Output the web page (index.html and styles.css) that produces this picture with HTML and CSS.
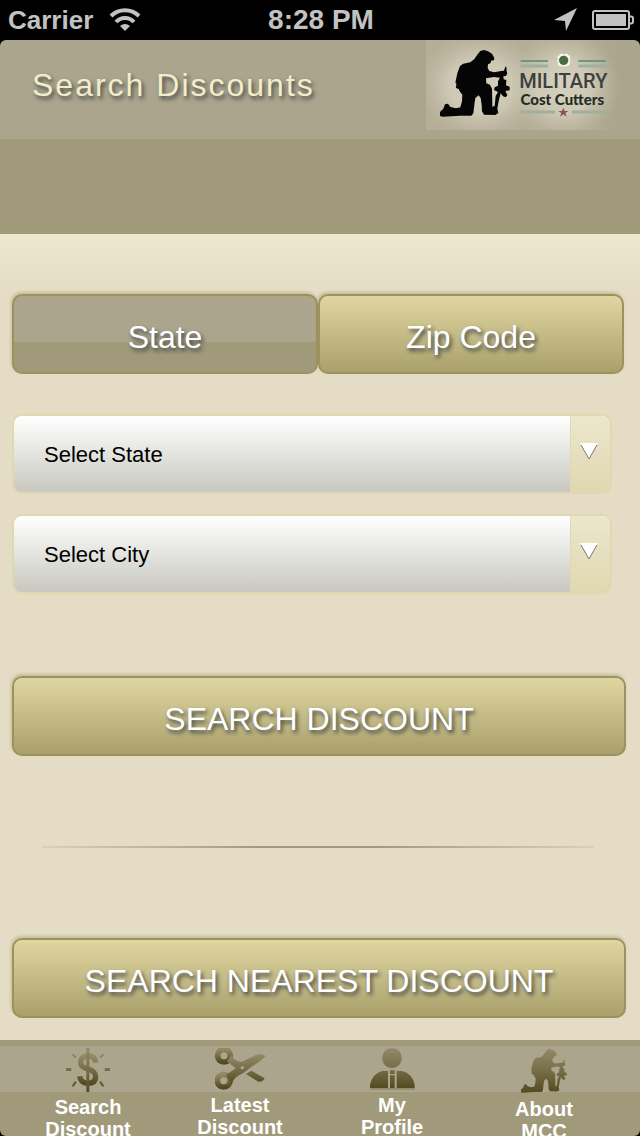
FILE: index.html
```html
<!DOCTYPE html>
<html lang="en">
<head>
<meta charset="utf-8">
<meta name="viewport" content="width=device-width, initial-scale=1">
<title>Search Discounts</title>
<link rel="stylesheet" href="styles.css">
</head>
<body>
<svg class="defs" aria-hidden="true">
  <defs>
    <linearGradient id="olive" x1="0" y1="0" x2="0" y2="1">
      <stop offset="0" stop-color="#918a68"/>
      <stop offset="0.5" stop-color="#766e48"/>
      <stop offset="1" stop-color="#544a22"/>
    </linearGradient>
    <path id="soldier" d="M173 55 L181 45 L192 42 L204 46 L216 53 L223 66 L222 73 L213 74 L212 81 L204 85 L203 96 L208 105 L222 109 L244 105 L252 104 L256 92 L259 92 L260 106 L262 112 L258 120 L250 121 L251 130 L259 132 L258 148 L269 152 L269 163 L256 165 L262 178 L257 184 L249 181 L242 172 L236 195 L232 218 L235 231 L226 237 L192 236 L186 226 L185 206 L182 186 L176 178 L166 186 L163 206 L160 232 L154 239 L120 239 L68 242 L60 240 L60 228 L70 218 L75 205 L84 203 L91 213 L108 217 L121 214 L126 196 L127 176 L120 167 L116 159 L108 156 L109 142 L106 140 L112 112 L120 90 L130 83 L151 79 L163 69 Z M198 127 L199 142 L210 146 L216 158 L217 212 L224 210 L227 180 L234 168 L222 162 L224 154 L234 149 L234 136 L240 125 L222 123 Z" fill-rule="evenodd"/>
  </defs>
</svg>
<div class="app">
  <div class="status">
    <div class="status-left">
      <span>Carrier</span>
      <svg class="wifi" viewBox="0 0 32 24" width="32" height="24" aria-hidden="true">
        <path d="M2 8 A20 20 0 0 1 30 8" fill="none" stroke="#c2c2c2" stroke-width="4"/>
        <path d="M7 14 A12 12 0 0 1 25 14" fill="none" stroke="#c2c2c2" stroke-width="4"/>
        <path d="M16 23 L11 18 Q16 14 21 18 Z" fill="#c2c2c2"/>
      </svg>
    </div>
    <span class="time">8:28 PM</span>
    <div class="status-right">
      <svg viewBox="0 0 24 24" width="24" height="24" aria-hidden="true"><path d="M23 0 L12 23 L11 13 L0 12 Z" fill="#c2c2c2"/></svg>
      <svg viewBox="0 0 42 20" width="42" height="20" aria-hidden="true">
        <rect x="1" y="1" width="36" height="18" rx="2" fill="none" stroke="#c2c2c2" stroke-width="2"/>
        <rect x="4" y="4" width="30" height="12" fill="#c2c2c2"/>
        <path d="M38 6.500 H39 Q41 6.500 41 8.500 V11.500 Q41 13.500 39 13.500 H38" fill="none" stroke="#c2c2c2" stroke-width="2"/>
      </svg>
    </div>
  </div>

  <header class="header">
    <h1 class="title">Search Discounts</h1>
    <svg class="logo" viewBox="0 12 660 282" width="220" height="94" role="img" aria-label="Military Cost Cutters">
      <defs>
        <radialGradient id="glowA" cx="0.5" cy="0.5" r="0.5">
          <stop offset="0" stop-color="#d6d1bd"/><stop offset="0.5" stop-color="#d4cfbb" stop-opacity="0.8"/><stop offset="1" stop-color="#c4bea8" stop-opacity="0"/>
        </radialGradient>
        <linearGradient id="plateFill">
          <stop offset="0" stop-color="#b8b29b" stop-opacity="0.7"/><stop offset="0.8" stop-color="#b8b29b" stop-opacity="0.6"/><stop offset="1" stop-color="#b8b29b" stop-opacity="0"/>
        </linearGradient>
        <clipPath id="plate"><rect x="18" y="12" width="582" height="270"/></clipPath>
      </defs>
      <g clip-path="url(#plate)">
        <rect x="18" y="12" width="582" height="270" fill="url(#plateFill)"/>
        <ellipse cx="180" cy="150" rx="190" ry="165" fill="url(#glowA)"/>
        <ellipse cx="430" cy="150" rx="170" ry="165" fill="url(#glowA)"/>
      </g>
      <use href="#soldier" fill="#050505"/>
      <g stroke="#6d9688" stroke-width="6">
        <path d="M302 75 H384 M475 75 H557"/>
        <path d="M302 90 H384 M475 90 H557" stroke="#9fb09d" stroke-width="9"/>
        <path d="M302 228 H405 M456 228 H557" stroke="#9fb09d" stroke-width="9"/>
      </g>
      <rect x="415" y="56" width="33" height="33" rx="9" fill="#f7f9f2" stroke="#f7f9f2" stroke-width="5" stroke-dasharray="8 3"/>
      <circle cx="431" cy="73" r="14" fill="#4b6b42"/>
      <text class="logo-top" x="430" y="156" text-anchor="middle">MILITARY</text>
      <text class="logo-bottom" x="427" y="208" text-anchor="middle">Cost Cutters</text>
      <path d="M430 215 L434 225 L445 225 L436 231 L440 242 L430 235 L420 242 L424 231 L415 225 L426 225 Z" fill="#87505a"/>
    </svg>
  </header>
  <div class="band"></div>

  <main class="content">
    <div class="segments">
      <button class="btn btn-active" type="button" aria-pressed="true">State</button>
      <button class="btn" type="button" aria-pressed="false">Zip Code</button>
    </div>
    <form class="form">
      <div class="picker">
        <select class="picker-input" aria-label="State"><option>Select State</option></select>
        <span class="picker-arrow"><svg viewBox="0 0 18 17" width="18" height="17" aria-hidden="true"><path d="M0 0 H18 L9 17 Z" fill="#fff"/><path d="M1 2 L9 16 L17 2" fill="none" stroke="#77746a"/></svg></span>
      </div>
      <div class="picker">
        <select class="picker-input" aria-label="City"><option>Select City</option></select>
        <span class="picker-arrow"><svg viewBox="0 0 18 17" width="18" height="17" aria-hidden="true"><path d="M0 0 H18 L9 17 Z" fill="#fff"/><path d="M1 2 L9 16 L17 2" fill="none" stroke="#77746a"/></svg></span>
      </div>
    </form>
    <button class="btn" type="button">SEARCH DISCOUNT</button>
    <hr class="divider">
    <button class="btn" type="button">SEARCH NEAREST DISCOUNT</button>
  </main>

  <nav class="tabs">
    <a class="tab" href="#search">
      <svg viewBox="0 0 132 132" width="44" height="44" aria-hidden="true">
        <path d="M89 44 Q88 24 66 24 Q44 25 44 43 Q44 58 66 63 Q89 69 89 87 Q88 106 66 106 Q43 105 41 85" fill="none" stroke="url(#olive)" stroke-width="16"/>
        <path d="M61 0 H70 V132 H61 Z M0 60 H16 V69 H0 Z M116 60 H132 V69 H116 Z M17 18 L22 17 L31 27 L27 31 Z M115 18 L110 17 L101 27 L105 31 Z M17 114 L27 99 L32 103 L23 116 Z M115 114 L105 99 L100 103 L109 116 Z" fill="url(#olive)"/>
      </svg>
      <span>Search<br>Discount</span>
    </a>
    <a class="tab" href="#latest">
      <svg viewBox="0 0 153 126" width="51" height="42" aria-hidden="true">
        <g fill="none" stroke="url(#olive)" stroke-width="17">
          <circle cx="27" cy="23" r="19"/><circle cx="26" cy="98" r="19"/>
        </g>
        <path d="M36 40 L50 22 Q56 40 80 42 L121 22 Q143 15 152 24 Q136 42 113 54 L85 75 Q56 86 50 110 L33 80 Q48 72 62 61 Q49 51 36 40 Z M93 78 L109 68 L149 91 Q144 103 130 101 Z" fill="url(#olive)"/>
        <circle cx="82" cy="59" r="5" fill="#aca58d"/>
      </svg>
      <span>Latest<br>Discount</span>
    </a>
    <a class="tab" href="#profile">
      <svg viewBox="0 0 135 126" width="45" height="42" aria-hidden="true">
        <path d="M66 1 C86 1 95 15 95 31 C95 49 82 60 66 60 C50 60 37 49 37 31 C37 15 47 1 66 1 Z M0 121 V110 Q8 76 37 69 H54 V121 Z M80 69 H97 Q126 76 134 110 V121 H80 Z M60 67 H74 V78 H60 Z M60 82 H74 V121 H60 Z" fill="url(#olive)"/>
        <path d="M0 123 H134" stroke="#918a68" stroke-width="4"/>
      </svg>
      <span>My<br>Profile</span>
    </a>
    <a class="tab" href="#about">
      <svg viewBox="60 38 210 210" width="46" height="46" aria-hidden="true"><use href="#soldier" fill="url(#olive)"/></svg>
      <span>About<br>MCC</span>
    </a>
  </nav>
</div>
</body>
</html>
```

FILE: styles.css
```css
* {
  box-sizing: border-box;
}

body {
  margin: 0;
  background: #000;
  font-family: "Liberation Sans", Arial, sans-serif;
}

.defs {
  position: absolute;
  width: 0;
  height: 0;
}

.app {
  display: flex;
  flex-direction: column;
  min-height: 100vh;
}

.status {
  display: grid;
  grid-template-columns: 1fr auto 1fr;
  align-items: center;
  height: 40px;
  padding: 0 6px 0 8px;
  color: #c2c2c2;
  font-size: 26px;
  font-weight: bold;
}

.status-left,
.status-right {
  display: flex;
  align-items: center;
  gap: 14px;
}

.status-left {
  gap: 16px;
}

.status-right {
  justify-content: flex-end;
}

.time {
  font-size: 28px;
}

.header {
  display: flex;
  justify-content: space-between;
  align-items: flex-start;
  padding-bottom: 5px;
  border-radius: 6px 6px 0 0;
  background: #aca58d;
}

.title {
  margin: 0;
  padding: 27px 0 0 32px;
  color: #f3edc9;
  font-size: 32px;
  font-weight: normal;
  line-height: 36px;
  letter-spacing: 2px;
  text-shadow: 2px 3px 4px #3c4346;
}

.logo {
  flex: none;
}

.logo-top {
  fill: #3b413e;
  font: 500 60px Roboto, sans-serif;
}

.logo-bottom {
  fill: #252b29;
  font: 900 45px Lato, sans-serif;
}

.band {
  height: 95px;
  background: #a19a7a;
}

.content {
  flex: 1;
  padding: 60px 14px 22px 12px;
  background: #e4dcc5 linear-gradient(#eee8d1, #e4dcc5) no-repeat 0 0 / 100% 60px;
}

.segments {
  display: grid;
  grid-template-columns: 1fr 1fr;
  margin-right: 2px;
}

.btn {
  display: block;
  width: 100%;
  height: 80px;
  padding: 6px 0 0;
  border: 2px solid #9b925d;
  border-radius: 10px;
  background: linear-gradient(#dfd6a2, #aaa06c);
  box-shadow: -1px -2px 3px rgba(155, 146, 93, 0.4);
  color: #fff;
  font-family: inherit;
  font-size: 32px;
  line-height: 36px;
  text-shadow: 2px 3px 4px #3c4346;
}

.btn-active {
  background: linear-gradient(#aca58d 60%, #a19a7a 60%);
}

.form {
  display: grid;
  gap: 20px;
  margin: 40px 14px 82px 0;
}

.picker {
  position: relative;
  height: 80px;
  border: 2px solid #e0d8b0;
  border-radius: 10px;
  overflow: hidden;
  background: linear-gradient(#fff, #c8c8c0);
}

.picker-input {
  display: block;
  width: 100%;
  height: 100%;
  padding: 0 44px 0 30px;
  border: 0;
  background: transparent;
  color: #000;
  font-family: inherit;
  font-size: 22px;
  appearance: none;
}

.picker-arrow {
  position: absolute;
  top: 0;
  right: 0;
  bottom: 0;
  display: flex;
  align-items: center;
  justify-content: center;
  width: 40px;
  padding: 0 3px 6px 0;
  border-left: 1px solid #e0d8b0;
  background: linear-gradient(#ece6cd, #e0d8b0);
  pointer-events: none;
}

.divider {
  height: 2px;
  margin: 90px 32px 90px 30px;
  border: 0;
  background: linear-gradient(90deg, #d9d1b8, #a19a7a 40%, #a19a7a 60%, #d9d1b8);
}

.tabs {
  display: grid;
  grid-template-columns: repeat(4, 1fr);
  height: 96px;
  padding: 8px 20px 0 12px;
  overflow: hidden;
  border-radius: 0 0 6px 6px;
  background: linear-gradient(#a19a7a 6px, #aca58d 6px, #aca58d 52px, #a19a7a 52px);
}

.tab {
  display: flex;
  flex-direction: column;
  align-items: center;
  gap: 4px;
  color: #fff;
  font-size: 20px;
  font-weight: bold;
  line-height: 22px;
  text-align: center;
  text-decoration: none;
}
```
